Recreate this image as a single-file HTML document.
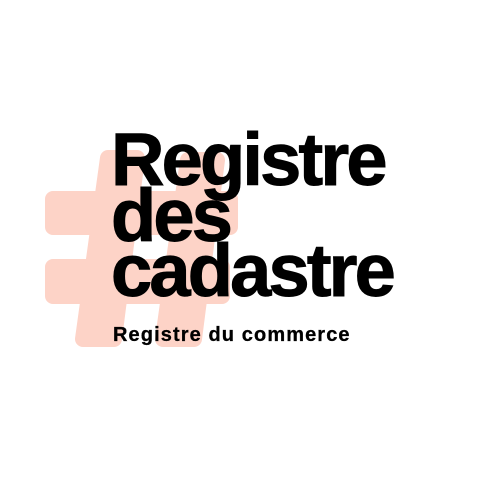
<!DOCTYPE html>
<html><head><meta charset="utf-8"><style>
html,body{margin:0;padding:0;background:#fff;width:500px;height:500px;overflow:hidden;position:relative}
svg{position:absolute;left:0;top:0}
.t{position:absolute;left:111px;font-family:"Liberation Sans",sans-serif;font-weight:bold;color:#000;white-space:nowrap}
.big{font-size:74px;letter-spacing:-2.8px;line-height:1;-webkit-text-stroke:1px #000}
.sub{font-size:20px;letter-spacing:1.1px;-webkit-text-stroke:0.3px #000}
</style></head><body>
<svg width="500" height="500" viewBox="0 0 500 500">
<g fill="#fdd3c7" stroke="#fdd3c7" stroke-width="16" stroke-linejoin="round">
<polygon points="108,158 137,158 114,339 83,339"/>
<polygon points="188,160 217,160 194,339 163,339"/>
<polygon points="53,199 230,199 230,227 53,227"/>
<polygon points="53,267 222,267 222,296 53,296"/>
</g>
</svg>
<div class="t big" style="top:123px">Registre</div>
<div class="t big" style="top:179px">des</div>
<div class="t big" style="top:234px">cadastre</div>
<div class="t sub" style="top:324px;left:113px">Registre du commerce</div>
</body></html>
